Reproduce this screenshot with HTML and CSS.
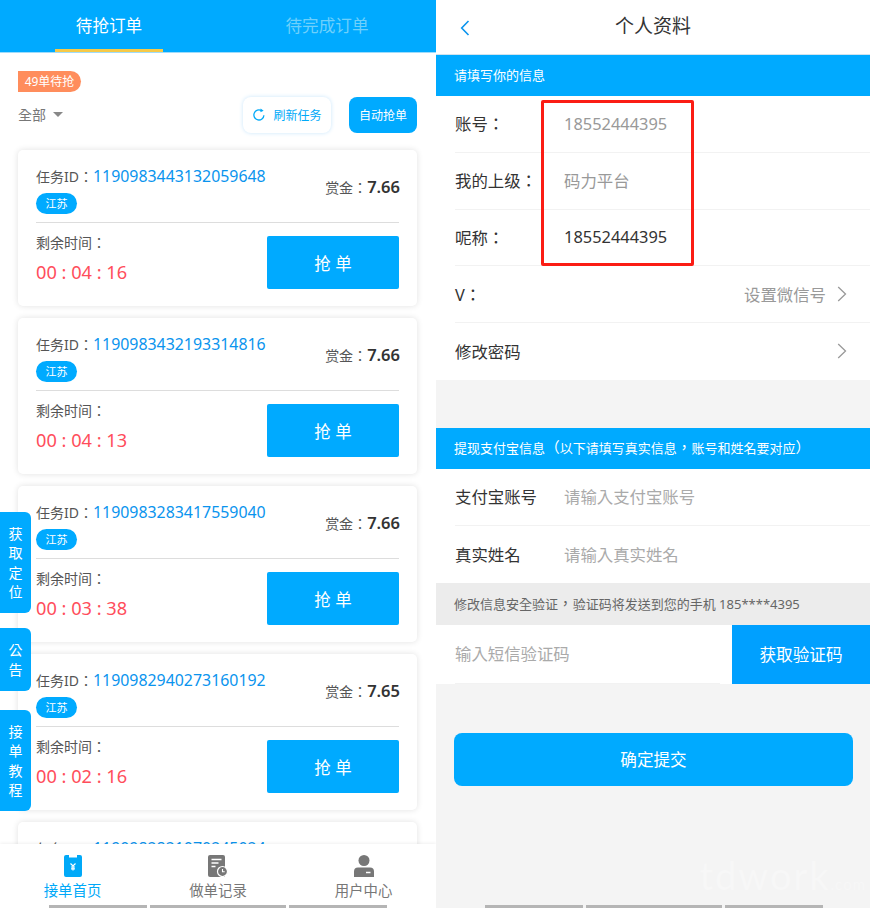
FILE: index.html
```html
<!DOCTYPE html>
<html lang="zh-TW">

<head>
    <meta charset="UTF-8">
    <title>订单</title>
    <link rel="stylesheet" href="styles.css">
</head>

<body>
    <div class="page">
        <!-- 左：待抢订单 -->
        <div class="panel panel-left">
            <div class="tabs">
                <div class="tab on"><span>待抢订单</span></div>
                <div class="tab"><span>待完成订单</span></div>
            </div>
            <div class="list">
                <div class="wait-row"><span class="wait">49单待抢</span></div>
                <div class="tool-row">
                    <div class="filter">全部<i class="caret"></i></div>
                    <div class="tool-btn refresh">
                        <svg width="14" height="14" viewBox="0 0 14 14"><path d="M11.9 7.2a5 5 0 1 1-2.4-4.5" fill="none" stroke="#00a9f8" stroke-width="1.3"/><path d="M8.6 0.4l3 2.3-3.2 1.6z" fill="#00a9f8"/></svg>
                        刷新任务
                    </div>
                    <div class="tool-btn auto">自动抢单</div>
                </div>

                <div class="card">
                    <div class="card-top">
                        <div>
                            <div class="task">任务ID：<span>1190983443132059648</span></div>
                            <span class="area">江苏</span>
                        </div>
                        <div class="money">赏金：<b>7.66</b></div>
                    </div>
                    <div class="card-bottom">
                        <div>
                            <div class="left-label">剩余时间：</div>
                            <div class="time">00 : 04 : 16</div>
                        </div>
                        <div class="grab">抢 单</div>
                    </div>
                </div>

                <div class="card">
                    <div class="card-top">
                        <div>
                            <div class="task">任务ID：<span>1190983432193314816</span></div>
                            <span class="area">江苏</span>
                        </div>
                        <div class="money">赏金：<b>7.66</b></div>
                    </div>
                    <div class="card-bottom">
                        <div>
                            <div class="left-label">剩余时间：</div>
                            <div class="time">00 : 04 : 13</div>
                        </div>
                        <div class="grab">抢 单</div>
                    </div>
                </div>

                <div class="card">
                    <div class="card-top">
                        <div>
                            <div class="task">任务ID：<span>1190983283417559040</span></div>
                            <span class="area">江苏</span>
                        </div>
                        <div class="money">赏金：<b>7.66</b></div>
                    </div>
                    <div class="card-bottom">
                        <div>
                            <div class="left-label">剩余时间：</div>
                            <div class="time">00 : 03 : 38</div>
                        </div>
                        <div class="grab">抢 单</div>
                    </div>
                </div>

                <div class="card">
                    <div class="card-top">
                        <div>
                            <div class="task">任务ID：<span>1190982940273160192</span></div>
                            <span class="area">江苏</span>
                        </div>
                        <div class="money">赏金：<b>7.65</b></div>
                    </div>
                    <div class="card-bottom">
                        <div>
                            <div class="left-label">剩余时间：</div>
                            <div class="time">00 : 02 : 16</div>
                        </div>
                        <div class="grab">抢 单</div>
                    </div>
                </div>

                <div class="card">
                    <div class="card-top">
                        <div>
                            <div class="task">任务ID：<span>1190982821070245024</span></div>
                        </div>
                    </div>
                </div>
            </div>

            <div class="tabbar">
                <div class="bar-item on">
                    <svg width="18" height="22" viewBox="0 0 18 22"><path d="M2 0h3v2.500h8V0h3a2 2 0 0 1 2 2v18a2 2 0 0 1-2 2H2a2 2 0 0 1-2-2V2a2 2 0 0 1 2-2z" fill="#00a9f8"/><path d="M6.500 8.500L9 11l2.500-2.500M9 11v4.500M7 12h4M7 13.800h4" fill="none" stroke="#fff" stroke-width="1.200"/></svg>
                    <span>接单首页</span>
                </div>
                <div class="bar-item">
                    <svg width="20" height="22" viewBox="0 0 20 22"><path d="M2 0h13a2 2 0 0 1 2 2v20H2a2 2 0 0 1-2-2V2a2 2 0 0 1 2-2z" fill="#777"/><path d="M3.500 4.500h10M3.500 8h7M3.500 11.500h4" stroke="#fff" stroke-width="1.500"/><circle cx="14.500" cy="16.500" r="5" fill="#777" stroke="#fff" stroke-width="1.200"/><path d="M14.500 14v2.800h2.200" fill="none" stroke="#fff" stroke-width="1.100"/></svg>
                    <span>做单记录</span>
                </div>
                <div class="bar-item">
                    <svg width="20" height="22" viewBox="0 0 20 22"><circle cx="10" cy="5.500" r="5.500" fill="#777"/><path d="M4 12.500h12a4 4 0 0 1 4 4V22H0v-5.500a4 4 0 0 1 4-4z" fill="#777"/><path d="M12 17.500h4.500" stroke="#fff" stroke-width="1.500"/></svg>
                    <span>用户中心</span>
                </div>
            </div>
            <div class="home-bars"><i class="b1"></i><i class="b2"></i><i class="b3"></i></div>

            <div class="side s1">获取定位</div>
            <div class="side s2">公告</div>
            <div class="side s3">接单教程</div>
        </div>

        <!-- 右：个人资料 -->
        <div class="panel panel-right">
            <div class="nav">
                <svg class="back" width="10" height="16" viewBox="0 0 10 16"><path d="M8.500 1L1.700 8l6.800 7" fill="none" stroke="#0a94ee" stroke-width="1.600"/></svg>
                个人资料
            </div>
            <div class="band">请填写你的信息</div>
            <div class="rows">
                <div class="row"><label>账号：</label><span class="val gray">18552444395</span></div>
                <div class="row"><label>我的上级：</label><span class="val gray">码力平台</span></div>
                <div class="row"><label>呢称：</label><span class="val">18552444395</span></div>
                <div class="row"><label>V：</label><span class="more">设置微信号<svg width="10" height="16" viewBox="0 0 10 16"><path d="M1.200 1l7.300 7-7.300 7" fill="none" stroke="#999" stroke-width="1.300"/></svg></span></div>
                <div class="row last"><label>修改密码</label><span class="more"><svg width="10" height="16" viewBox="0 0 10 16"><path d="M1.200 1l7.300 7-7.300 7" fill="none" stroke="#999" stroke-width="1.300"/></svg></span></div>
            </div>
            <div class="band band2">提现支付宝信息<i class="pu">（</i>以下请填写真实信息<i class="pu">，</i>账号和姓名要对应<i class="pu">）</i></div>
            <div class="rows">
                <div class="row"><label>支付宝账号</label><span class="val hint">请输入支付宝账号</span></div>
                <div class="row last"><label>真实姓名</label><span class="val hint">请输入真实姓名</span></div>
            </div>
            <div class="tip">修改信息安全验证<i class="pu">，</i>验证码将发送到您的手机 185****4395</div>
            <div class="code-row">
                <div class="code-input">输入短信验证码</div>
                <div class="code-btn">获取验证码</div>
            </div>
            <div class="submit">确定提交</div>
            <div class="home-bars"><i class="b1"></i><i class="b2"></i><i class="b3"></i></div>
            <div class="mark">tdwork<small>.com</small></div>
            <div class="redbox"></div>
        </div>
    </div>
</body>

</html>
```

FILE: styles.css
```css
* {
    margin: 0;
    padding: 0;
    box-sizing: border-box;
}

body {
    font-family: "Noto Sans", "Noto Sans CJK TC", sans-serif;
    background: #fff;
    color: #333;
}

.page {
    display: flex;
    width: 870px;
    height: 908px;
    overflow: hidden;
}

.panel {
    position: relative;
    height: 908px;
    overflow: hidden;
    display: flex;
    flex-direction: column;
}

.panel-left {
    width: 436px;
    background: #fff;
}

.panel-right {
    width: 434px;
    background: #f4f4f4;
}

/* 顶部tab */
.tabs {
    display: flex;
    flex: none;
    height: 53px;
    background: #00aaff;
    border-bottom: 1px solid #9fdcfb;
}

.tab {
    width: 218px;
    text-align: center;
    font-size: 16.6px;
    line-height: 52px;
    color: #6fd0fb;
}

.tab span {
    display: inline-block;
    height: 52px;
}

.tab.on {
    color: #fff;
    position: relative;
}

.tab.on::after {
    content: "";
    position: absolute;
    left: 55px;
    bottom: 0;
    width: 108px;
    height: 3px;
    background: #f6c948;
}

/* 列表 */
.list {
    flex: 1;
    overflow: hidden;
    padding: 17px 19px 0 18px;
    min-height: 0;
}

.wait-row {
    height: 21px;
    line-height: 21px;
}

.wait {
    display: inline-block;
    width: 63px;
    height: 21px;
    line-height: 21px;
    text-align: center;
    font-size: 12px;
    color: #fff;
    background: #ff8d5c;
    border-radius: 0 11px 11px 0;
}

.tool-row {
    display: flex;
    align-items: center;
    height: 36px;
    margin-top: 6px;
    margin-bottom: 17px;
}

.filter {
    font-size: 14px;
    color: #777;
    margin-right: auto;
    margin-top: -3px;
    display: flex;
    align-items: center;
}

.caret {
    width: 0;
    height: 0;
    margin-left: 7px;
    margin-top: 2px;
    border-left: 5px solid transparent;
    border-right: 5px solid transparent;
    border-top: 5px solid #888;
}

.tool-btn {
    height: 36px;
    border-radius: 8px;
    font-size: 12px;
    display: flex;
    align-items: center;
    justify-content: center;
}

.refresh {
    width: 88px;
    gap: 7px;
    margin-right: 18px;
    color: #00a9f8;
    background: #fff;
    box-shadow: 0 0 4px #c9e6fb;
}

.auto {
    width: 68px;
    color: #fff;
    background: #00aaff;
}

.card {
    height: 156px;
    margin-bottom: 12px;
    padding: 13px 18px 0;
    background: #fff;
    border-radius: 5px;
    box-shadow: 0 0 6px rgba(0, 0, 0, 0.12);
}

.card-top {
    display: flex;
    justify-content: space-between;
    align-items: flex-start;
    height: 60px;
    padding-top: 1px;
    border-bottom: 1px solid #ddd;
}

.task {
    font-size: 14px;
    line-height: 24px;
    color: #555;
    white-space: nowrap;
}

.task span {
    font-size: 15.9px;
    color: #0a94ee;
}

.area {
    display: block;
    width: 41px;
    height: 21px;
    margin-top: 4px;
    line-height: 21px;
    text-align: center;
    font-size: 11px;
    color: #fff;
    background: #00aaff;
    border-radius: 11px;
}

.money {
    font-size: 14px;
    line-height: 24px;
    color: #555;
    white-space: nowrap;
    margin-top: 11px;
    margin-right: -1px;
}

.money b {
    font-size: 16.5px;
    font-weight: 600;
    color: #333;
}

.card-bottom {
    display: flex;
    justify-content: space-between;
    padding-top: 13px;
}

.left-label {
    margin-top: -3px;
    font-size: 14px;
    line-height: 20px;
    color: #555;
}

.time {
    margin-top: 7px;
    font-size: 18.2px;
    line-height: 24px;
    color: #ff4d5b;
}

.grab {
    width: 132px;
    height: 53px;
    line-height: 55px;
    text-align: center;
    font-size: 16.5px;
    color: #fff;
    background: #00aaff;
    border-radius: 2px;
}

/* 底部菜单 */
.tabbar {
    flex: none;
    display: flex;
    justify-content: space-between;
    height: 64px;
    padding: 11px 0 0;
    background: #fff;
    box-shadow: 0 -1px 3px rgba(0, 0, 0, 0.06);
    position: relative;
}

.bar-item {
    width: 145px;
    display: flex;
    flex-direction: column;
    align-items: center;
    font-size: 14.4px;
    color: #777;
}

.bar-item span {
    line-height: 20px;
    margin-top: 4px;
}

.bar-item.on {
    color: #00a9f8;
}

.home-bars {
    position: absolute;
    left: 49px;
    bottom: 0;
    display: flex;
    gap: 3px;
}

.home-bars i {
    display: block;
    height: 3px;
    background: #b5b5b5;
}

.b1 {
    width: 98px;
}

.b2 {
    width: 136px;
}

.b3 {
    width: 98px;
}

/* 悬浮按钮 */
.side {
    position: absolute;
    left: 0;
    width: 31px;
    padding: 0 7px;
    font-size: 14px;
    line-height: 19.4px;
    text-align: center;
    color: #fff;
    background: #00aaff;
    border-radius: 0 6px 6px 0;
    display: flex;
    align-items: center;
}

.s1 {
    top: 512px;
    height: 101px;
}

.s2 {
    top: 628px;
    height: 63px;
}

.s3 {
    top: 710px;
    height: 101px;
}

/* 个人资料 */
.nav {
    position: relative;
    flex: none;
    height: 55px;
    line-height: 53px;
    text-align: center;
    font-size: 19px;
    color: #333;
    background: #fff;
    border-bottom: 1px solid #cfe3ee;
}

.back {
    position: absolute;
    left: 24px;
    top: 20px;
}

.band {
    flex: none;
    height: 41px;
    line-height: 41px;
    padding-left: 18px;
    font-size: 13px;
    color: #fff;
    background: #00aaff;
}

.band2 {
    margin-top: 48px;
}

.pu {
    font-style: normal;
    font-size: 14.7px;
    line-height: 1;
}

.rows {
    flex: none;
    background: #fff;
    padding-left: 19px;
}

.row {
    display: flex;
    align-items: center;
    height: 56.8px;
    padding-bottom: 1px;
    border-bottom: 1px solid #f2f2f2;
    font-size: 16.4px;
}

.row.last {
    border-bottom: 0;
}

.row label {
    width: 109px;
    color: #333;
    white-space: nowrap;
}

.val {
    color: #333;
}

.val.gray {
    color: #999;
}

.val.hint {
    color: #aaa;
}

.more {
    margin-left: auto;
    margin-right: 23px;
    display: flex;
    align-items: center;
    gap: 11px;
    color: #999;
}

.tip {
    flex: none;
    height: 42px;
    line-height: 42px;
    padding-left: 18px;
    font-size: 13px;
    color: #666;
    background: #ececec;
}

.code-row {
    flex: none;
    display: flex;
    height: 59px;
    background: #fff;
}

.code-input {
    flex: 1;
    margin-left: 19px;
    margin-right: 12px;
    line-height: 58px;
    font-size: 16.4px;
    color: #aaa;
    border-bottom: 1px solid #f2f2f2;
}

.code-btn {
    width: 138px;
    line-height: 59px;
    text-align: center;
    font-size: 16.6px;
    color: #fff;
    background: #00a0ff;
}

.submit {
    flex: none;
    width: 399px;
    height: 53px;
    margin: 49px 0 0 18px;
    line-height: 53px;
    text-align: center;
    font-size: 16.6px;
    color: #fff;
    background: #00aaff;
    border-radius: 8px;
}

.mark {
    position: absolute;
    right: 4px;
    bottom: 4px;
    font-family: "Lato", sans-serif;
    font-size: 38px;
    line-height: 40px;
    letter-spacing: 2px;
    color: #f7f7f7;
}

.mark small {
    font-size: 15px;
    letter-spacing: 1px;
}

.redbox {
    position: absolute;
    left: 105px;
    top: 100px;
    width: 153px;
    height: 166px;
    border: 3px solid #fb1c14;
    border-radius: 2px;
}
```
